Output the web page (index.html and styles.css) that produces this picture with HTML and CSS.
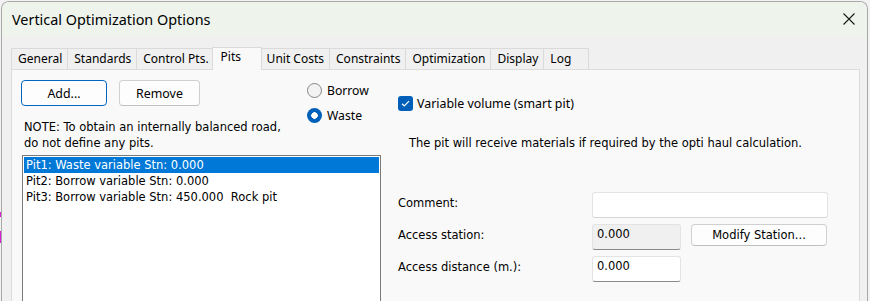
FILE: index.html
```html
<!DOCTYPE html>
<html>
<head>
<meta charset="utf-8">
<link rel="stylesheet" href="styles.css">
</head>
<body>
<div class="window">
  <div class="titlebar">
    <span class="title">Vertical Optimization Options</span>
    <svg class="close" width="12" height="12" viewBox="0 0 12 12"><path d="M0.5 0.5 L11.5 11.5 M11.5 0.5 L0.5 11.5" stroke="#1a1a1a" stroke-width="1.1" fill="none"/></svg>
  </div>
  <div class="content">
    <div class="tabs">
      <div class="tab">General</div>
      <div class="tab">Standards</div>
      <div class="tab">Control Pts.</div>
      <div class="tab active">Pits</div>
      <div class="tab">Unit Costs</div>
      <div class="tab">Constraints</div>
      <div class="tab">Optimization</div>
      <div class="tab">Display</div>
      <div class="tab last">Log</div>
    </div>
    <div class="panel">
      <div class="btns">
        <button class="btn default">Add...</button>
        <button class="btn">Remove</button>
      </div>
      <div class="radios">
        <div class="radio"><span class="rb"></span>Borrow</div>
        <div class="radio"><span class="rb on"></span>Waste</div>
      </div>
      <p class="note">NOTE: To obtain an internally balanced road,<br>do not define any pits.</p>
      <div class="list">
        <div class="item sel">Pit1: Waste variable Stn: 0.000</div>
        <div class="item">Pit2: Borrow variable Stn: 0.000</div>
        <div class="item">Pit3: Borrow variable Stn: 450.000  Rock pit</div>
      </div>
      <div class="right">
        <div class="check"><span class="cb"><svg width="15" height="15" viewBox="0 0 15 15"><path d="M4 7.8 L6.3 10 L11 5.2" stroke="#fff" stroke-width="1.2" fill="none"/></svg></span>Variable volume (smart pit)</div>
        <p class="info">The pit will receive materials if required by the opti haul calculation.</p>
        <div class="form">
          <span class="lbl">Comment:</span>
          <div class="field wide"></div>
          <span class="lbl">Access station:</span>
          <div class="field ro">0.000</div>
          <button class="btn mod">Modify Station...</button>
          <span class="lbl">Access distance (m.):</span>
          <div class="field">0.000</div>
        </div>
      </div>
    </div>
  </div>
</div>
</body>
</html>
```
FILE: styles.css
```css
* { box-sizing: border-box; }
body {
  margin: 0;
  height: 301px;
  overflow: hidden;
  font-family: "Noto Sans", sans-serif;
  color: #000;
  background-color: #f2f2f2;
  background-image: linear-gradient(#d81ed8, #d81ed8), linear-gradient(#d81ed8, #d81ed8);
  background-size: 1px 5px, 1px 12px;
  background-position: 0 212px, 0 231px;
  background-repeat: no-repeat;
}
.window {
  margin: 1px 0 0 1px;
  width: 867px;
  height: 300px;
  border: 1px solid #a8a8a8;
  border-bottom: 0;
  border-radius: 8px 8px 0 0;
  overflow: hidden;
  display: flex;
  flex-direction: column;
  background: #f0f0f0;
}
.titlebar {
  height: 35px;
  flex: none;
  background: #eef4ec;
  display: flex;
  align-items: flex-start;
  padding: 8px 0 0 10px;
}
.title {
  font-size: 14.4px;
  line-height: 20px;
}
.close {
  margin: 3px 12px 0 auto;
}
.content {
  flex: 1;
  display: flex;
  flex-direction: column;
  padding: 10px 7px 0 9px;
}
.tabs {
  display: flex;
  align-items: flex-end;
  height: 22px;
  flex: none;
}
.tab {
  height: 21px;
  min-width: 46px;
  padding: 0 5px 0 6px;
  border: 1px solid #dadada;
  border-bottom: 0;
  border-right: 0;
  font-size: 12px;
  line-height: 20px;
  background: #f0f0f0;
  white-space: nowrap;
}
.tab.last { border-right: 1px solid #dadada; }
.tab.active {
  position: relative;
  z-index: 1;
  height: 23px;
  min-width: 50px;
  margin: 0 -2px -1px -2px;
  padding-left: 8px;
  border-right: 1px solid #dadada;
  background: #f9f9f9;
  line-height: 18px;
}
.tab.active + .tab { border-left: 0; padding-left: 7px; }
.panel {
  flex: 1;
  border: 1px solid #dcdcdc;
  border-bottom: 0;
  background: #f9f9f9;
  display: grid;
  grid-template-columns: 285px 76px 1fr;
  grid-template-rows: auto auto 1fr;
  grid-template-areas:
    "btns radios right"
    "note radios right"
    "list list right";
  padding: 10px 0 0 9px;
}
.btns { grid-area: btns; display: flex; gap: 12px; align-self: start; }
.btn {
  font-family: "Noto Sans", sans-serif;
  font-size: 12.4px;
  height: 26px;
  background: #fdfdfd;
  border: 1px solid #d0d0d0;
  border-bottom-color: #c0c0c0;
  border-radius: 4px;
  color: #000;
  padding: 0;
}
.btns .btn { width: 81px; }
.btns .btn.default { width: 86px; border-color: #0067c0; }
.radios { grid-area: radios; margin-top: -2px; padding-left: 1px; }
.radio {
  display: flex;
  align-items: center;
  height: 25px;
  font-size: 12.2px;
  gap: 5px;
}
.rb {
  width: 15px;
  height: 15px;
  border-radius: 50%;
  border: 1px solid #858585;
  background: #f3f3f3;
}
.rb.on {
  border: 0;
  background: radial-gradient(circle, #fff 0 3px, #005fb8 3.5px);
}
.note {
  grid-area: note;
  margin: 13px 0 0 3px;
  font-family: "DejaVu Sans", sans-serif;
  font-size: 11.5px;
  line-height: 16px;
}
.list {
  grid-area: list;
  margin: 4px 1px 0 1px;
  border: 1px solid #7a7a7a;
  background: #fff;
  padding: 1px;
  height: 160px;
}
.item {
  height: 16px;
  line-height: 16px;
  padding-left: 2px;
  font-family: "DejaVu Sans", sans-serif;
  font-size: 11.5px;
  white-space: pre;
}
.item.sel { background: #0078d7; color: #fff; }
.right { grid-area: right; padding-left: 16px; }
.check {
  display: flex;
  align-items: center;
  gap: 4px;
  height: 16px;
  margin-top: 15px;
  font-size: 12.4px;
}
.cb {
  width: 15px;
  height: 15px;
  border-radius: 3px;
  background: #005fb8;
  display: flex;
}
.info {
  margin: 24px 0 0 11px;
  font-family: "DejaVu Sans", sans-serif;
  font-size: 11.5px;
  line-height: 16px;
}
.form {
  margin-top: 41px;
  display: grid;
  grid-template-columns: 194px 89px 10px 137px;
  grid-auto-rows: 26px;
  row-gap: 6px;
  font-family: "DejaVu Sans", sans-serif;
  font-size: 11.5px;
  line-height: 16px;
}
.lbl { padding-top: 3px; grid-column: 1; }
.field {
  grid-column: 2;
  background: #fff;
  border: 1px solid #e3e3e3;
  border-bottom-color: #8a8a8a;
  border-radius: 3px;
  padding: 1px 0 0 4px;
}
.field.wide { grid-column: 2 / span 3; border-bottom-color: #d6d6d6; }
.field.ro { background: #f0f0f0; }
.btn.mod {
  grid-column: 4;
  height: 22px;
  width: 136px;
  font-family: "DejaVu Sans", sans-serif;
  font-size: 11.5px;
}
```
